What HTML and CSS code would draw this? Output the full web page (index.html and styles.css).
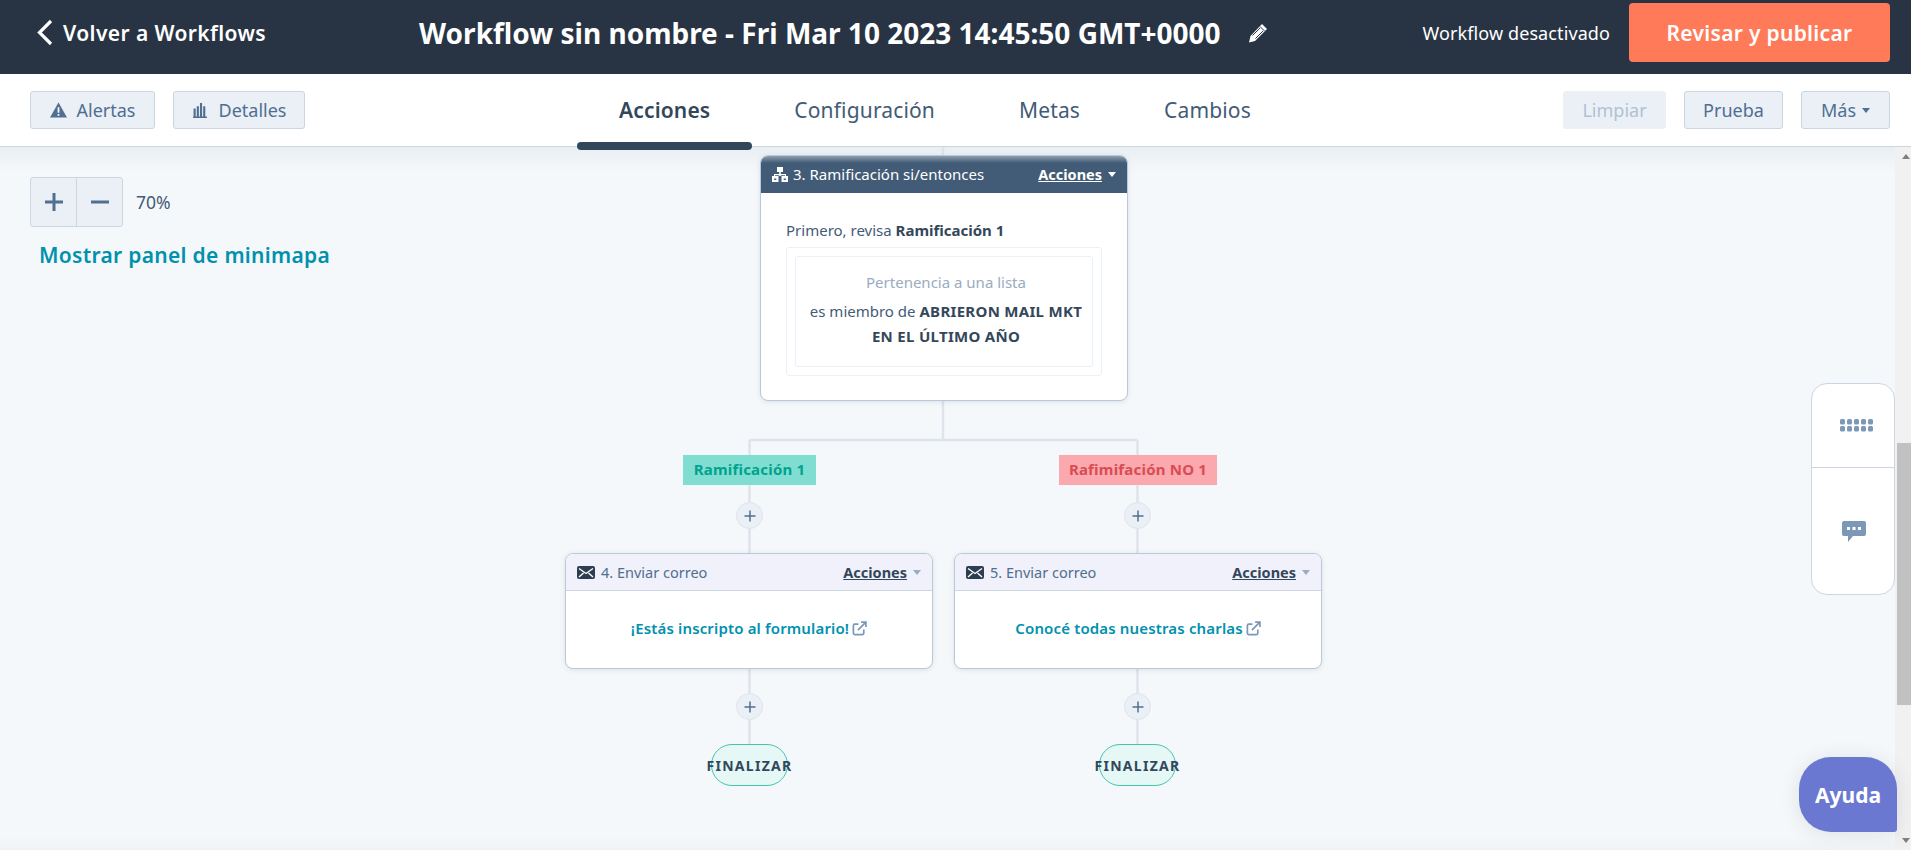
FILE: index.html
```html
<!DOCTYPE html>
<html lang="en">
<head>
    <meta charset="UTF-8">
    <meta name="viewport" content="width=device-width, initial-scale=1.0">
    <title>Workflow</title>
    <link rel="stylesheet" href="styles.css">
</head>
<body>
    <svg class="defs" width="0" height="0">
        <symbol id="i-mail" viewBox="0 0 18 13">
            <rect width="18" height="13" rx="2" fill="#2d3e50"/>
            <path d="M2 2.500l7 5 7-5M2 11l4.500-4M16 11l-4.500-4" fill="none" stroke="#fff" stroke-width="1.400"/>
        </symbol>
        <symbol id="i-link" viewBox="0 0 14 14">
            <path d="M11 8v3.500a1.200 1.200 0 0 1-1.200 1.200H2.500a1.200 1.200 0 0 1-1.200-1.200V4.200A1.200 1.200 0 0 1 2.500 3H6" fill="none" stroke="#7c98b6" stroke-width="1.600"/>
            <path d="M5.500 8.500L12.500 1.500M8.500 1h4.500v4.500" fill="none" stroke="#7c98b6" stroke-width="1.600"/>
        </symbol>
        <symbol id="i-plus" viewBox="0 0 12 12">
            <path d="M6 0.500v11M0.500 6h11" fill="none" stroke="#516f90" stroke-width="1.500"/>
        </symbol>
    </svg>

    <!-- Top bar -->
    <header class="topbar">
        <a class="back">
            <svg class="back-icon" viewBox="0 0 17 27"><path d="M15 2L3.500 13.500 15 25" fill="none" stroke="#fff" stroke-width="3.200"/></svg>
            Volver a Workflows
        </a>
        <h1 class="title">Workflow sin nombre - Fri Mar 10 2023 14:45:50 GMT+0000</h1>
        <svg class="pencil" viewBox="0 0 20 20">
            <path d="M14 1l5 5L7 18l-6 1.500L2.500 13z" fill="#fff"/>
            <path d="M12 3.500l4.500 4.500M4.500 12.500L12 5M7.500 15.500L15 8" stroke="#283444" stroke-width="1"/>
        </svg>
        <span class="status">Workflow desactivado</span>
        <button class="publish">Revisar y publicar</button>
    </header>

    <!-- Tabs bar -->
    <nav class="subbar">
        <div class="btn-group">
            <button class="btn btn-alert">
                <svg class="btn-icon" viewBox="0 0 16 15"><path d="M8 0.500L16 14.500H0z" fill="#516f90"/><path d="M8 5v5M8 11.200v1.600" stroke="#fff" stroke-width="1.600"/></svg>
                Alertas
            </button>
            <button class="btn btn-detail">
                <svg class="btn-icon" viewBox="0 0 14 15"><path d="M1.500 6v8M4.500 4v10M7.500 1v13M10.500 4v10M0 14.500h13" stroke="#516f90" stroke-width="2" fill="none"/></svg>
                Detalles
            </button>
        </div>
        <div class="tabs">
            <a class="tab tab-active">Acciones</a>
            <a class="tab">Configuración</a>
            <a class="tab">Metas</a>
            <a class="tab">Cambios</a>
        </div>
        <div class="btn-group btn-group-right">
            <button class="btn btn-clear">Limpiar</button>
            <button class="btn btn-test">Prueba</button>
            <button class="btn btn-more">Más <span class="caret"></span></button>
        </div>
    </nav>

    <div class="workspace">
        <main class="canvas">
            <div class="zoom-row">
                <div class="zoom">
                    <button class="zoom-btn"><svg class="zoom-icon" viewBox="0 0 18 18"><path d="M9 0v18M0 9h18" stroke="#516f90" stroke-width="3"/></svg></button>
                    <button class="zoom-btn"><svg class="zoom-icon" viewBox="0 0 18 18"><path d="M0 9h18" stroke="#516f90" stroke-width="3"/></svg></button>
                </div>
                <span class="zoom-value">70%</span>
            </div>
            <a class="minimap-link">Mostrar panel de minimapa</a>

            <!-- Workflow diagram -->
            <svg class="wires" width="1895" height="703">
                <path d="M943 0v8M943 254v39M749.500 293H1137.500M749.500 293V406M1137.500 293V406M749.500 521V597M1137.500 521V597" fill="none" stroke="#dfe3eb" stroke-width="2.500"/>
            </svg>

            <section class="node node-branch">
                <div class="node-head node-head-dark">
                    <svg class="branch-icon" viewBox="0 0 16 15">
                        <path d="M5 0h6v5H8.800v2H14v2h-1v-.8H8.800V9h-1.600V8.200H3V9H2V7h5.200V5H5z" fill="#fff"/>
                        <path d="M0 9h6.500v6H0zM9.500 9H16v6H9.500z" fill="#fff"/>
                        <path d="M2.200 11.500h2.100v1.500H2.200zM11.700 11.500h2.100v1.500h-2.100z" fill="#425b76"/>
                    </svg>
                    <span class="node-name">3. Ramificación si/entonces</span>
                    <a class="node-actions">Acciones</a>
                    <span class="caret caret-white"></span>
                </div>
                <div class="branch-body">
                    <p class="branch-first">Primero, revisa <b>Ramificación 1</b></p>
                    <div class="filter-outer">
                        <div class="filter-inner">
                            <p class="filter-type">Pertenencia a una lista</p>
                            <p class="filter-text">es miembro de <b>ABRIERON MAIL MKT EN EL ÚLTIMO AÑO</b></p>
                        </div>
                    </div>
                </div>
            </section>

            <div class="branch-label label-yes">Ramificación 1</div>
            <div class="branch-label label-no">Rafimifación NO 1</div>

            <button class="add add-a"><svg class="add-icon"><use href="#i-plus"/></svg></button>
            <button class="add add-b"><svg class="add-icon"><use href="#i-plus"/></svg></button>

            <section class="node node-mail node-4">
                <div class="node-head">
                    <svg class="mail-icon"><use href="#i-mail"/></svg>
                    <span class="node-name">4. Enviar correo</span>
                    <a class="node-actions">Acciones</a>
                    <span class="caret caret-light"></span>
                </div>
                <div class="mail-body">
                    <a class="mail-link">¡Estás inscripto al formulario!</a>
                    <svg class="link-icon"><use href="#i-link"/></svg>
                </div>
            </section>

            <section class="node node-mail node-5">
                <div class="node-head">
                    <svg class="mail-icon"><use href="#i-mail"/></svg>
                    <span class="node-name">5. Enviar correo</span>
                    <a class="node-actions">Acciones</a>
                    <span class="caret caret-light"></span>
                </div>
                <div class="mail-body">
                    <a class="mail-link">Conocé todas nuestras charlas</a>
                    <svg class="link-icon"><use href="#i-link"/></svg>
                </div>
            </section>

            <button class="add add-c"><svg class="add-icon"><use href="#i-plus"/></svg></button>
            <button class="add add-d"><svg class="add-icon"><use href="#i-plus"/></svg></button>

            <div class="end end-a"><span>FINALIZAR</span></div>
            <div class="end end-b"><span>FINALIZAR</span></div>

            <!-- Floating side panel -->
            <aside class="side-panel">
                <div class="side-cell side-cell-top">
                    <svg class="dots-icon" viewBox="0 0 34 13">
                        <g fill="#7c98b6">
                            <rect x="0" y="0" width="5" height="5.500" rx="1.500"/><rect x="7" y="0" width="5" height="5.500" rx="1.500"/><rect x="14" y="0" width="5" height="5.500" rx="1.500"/><rect x="21" y="0" width="5" height="5.500" rx="1.500"/><rect x="28" y="0" width="5" height="5.500" rx="1.500"/>
                            <rect x="0" y="7" width="5" height="5.500" rx="1.500"/><rect x="7" y="7" width="5" height="5.500" rx="1.500"/><rect x="14" y="7" width="5" height="5.500" rx="1.500"/><rect x="21" y="7" width="5" height="5.500" rx="1.500"/><rect x="28" y="7" width="5" height="5.500" rx="1.500"/>
                        </g>
                    </svg>
                </div>
                <div class="side-cell">
                    <svg class="chat-icon" viewBox="0 0 24 21">
                        <path d="M2 0h20a2 2 0 0 1 2 2v11a2 2 0 0 1-2 2H11l-5 6v-6H2a2 2 0 0 1-2-2V2a2 2 0 0 1 2-2z" fill="#7c98b6"/>
                        <path d="M5 6h3v3H5zM10.500 6h3v3h-3zM16 6h3v3h-3z" fill="#fff"/>
                    </svg>
                </div>
            </aside>

            <button class="help">Ayuda</button>
        </main>

        <div class="scrollbar">
            <span class="scroll-arrow scroll-up"></span>
            <div class="scroll-track"><div class="scroll-thumb"></div></div>
            <span class="scroll-arrow scroll-down"></span>
        </div>
    </div>
</body>
</html>
```

FILE: styles.css
```css
* {
  box-sizing: border-box;
}

html, body {
  margin: 0;
  height: 850px;
  overflow: hidden;
}

body {
  font-family: "Noto Sans", "Open Sans", sans-serif;
  color: #33475b;
  background-color: #f5f8fa;
}

.defs {
  position: absolute;
}

p {
  margin: 0;
}

button {
  font-family: inherit;
  cursor: pointer;
}

/* Top Bar */
.topbar {
  display: flex;
  align-items: center;
  height: 74px;
  padding: 0 21px 9px 36px;
  background-color: #283444;
  color: #fff;
}

.back {
  display: flex;
  align-items: center;
  font-size: 21px;
  font-weight: 600;
  letter-spacing: 0.4px;
  white-space: nowrap;
}

.back-icon {
  width: 17px;
  height: 27px;
  margin-right: 10px;
}

.title {
  margin: 0 0 0 153px;
  font-size: 28px;
  font-weight: 700;
  white-space: nowrap;
}

.pencil {
  width: 20px;
  height: 20px;
  margin-left: 27px;
}

.status {
  margin-left: auto;
  font-size: 18px;
  letter-spacing: 0.1px;
}

.publish {
  width: 261px;
  height: 59px;
  margin-left: 19px;
  border: 0;
  border-radius: 4px;
  background-color: #ff7a59;
  color: #fff;
  font-size: 21px;
  font-weight: 600;
  letter-spacing: 0.3px;
}

/* Tabs Bar */
.subbar {
  position: relative;
  z-index: 1;
  display: flex;
  align-items: center;
  height: 73px;
  padding: 0 21px 0 30px;
  background-color: #fff;
  border-bottom: 1px solid #cbd6e2;
}

.btn-group {
  display: flex;
  gap: 18px;
}

.btn-group-right {
  margin-left: auto;
}

.btn {
  display: flex;
  align-items: center;
  justify-content: center;
  height: 38px;
  padding: 0;
  border: 1px solid #cbd6e2;
  border-radius: 3px;
  background-color: #eaf0f6;
  color: #506e91;
  font-size: 18px;
}

.btn-icon {
  width: 17px;
  height: 16px;
  margin-right: 10px;
}

.btn-alert {
  width: 125px;
}

.btn-detail {
  width: 132px;
}

.btn-clear {
  width: 103px;
  border-color: #eaf0f6;
  color: #b0c1d4;
}

.btn-test {
  width: 99px;
}

.btn-more {
  width: 89px;
}

.caret {
  display: inline-block;
  width: 0;
  height: 0;
  margin-left: 6px;
  border-left: 4.5px solid transparent;
  border-right: 4.5px solid transparent;
  border-top: 5px solid #506e91;
}

.caret-white {
  border-top-color: #fff;
}

.caret-light {
  border-top-color: #99acc2;
}

.tabs {
  display: flex;
  align-self: stretch;
  margin-left: 272px;
}

.tab {
  position: relative;
  display: flex;
  align-items: center;
  padding: 0 42px;
  font-size: 21px;
  letter-spacing: 0.15px;
  color: #425b76;
}

.tab-active {
  font-weight: 600;
  color: #33475b;
}

.tab-active::after {
  content: "";
  position: absolute;
  left: 0;
  right: 0;
  bottom: -4px;
  height: 8px;
  border-radius: 4px;
  background-color: #33475b;
}

/* Canvas */
.workspace {
  display: flex;
  height: 703px;
}

.canvas {
  position: relative;
  flex: 1;
  padding: 30px 0 0 30px;
  background: linear-gradient(#e9eef3 0, #f5f8fa 24px, #f5f8fa calc(100% - 14px), #f0f3f6 100%);
}

.zoom-row {
  display: flex;
  align-items: center;
}

.zoom {
  display: flex;
  width: 93px;
  height: 50px;
  border: 1px solid #cbd6e2;
  border-radius: 3px;
  background-color: #eaf0f6;
}

.zoom-btn {
  display: flex;
  align-items: center;
  justify-content: center;
  flex: 1;
  padding: 0;
  border: 0;
  background: none;
}

.zoom-btn + .zoom-btn {
  border-left: 1px solid #cbd6e2;
}

.zoom-icon {
  width: 18px;
  height: 18px;
}

.zoom-value {
  margin-left: 13px;
  font-size: 17.500px;
  color: #425b76;
}

.minimap-link {
  display: inline-block;
  margin: 14px 0 0 9px;
  font-size: 21px;
  font-weight: 600;
  letter-spacing: 0.3px;
  color: #0091ae;
}

/* Diagram */
.wires {
  position: absolute;
  left: 0;
  top: 0;
}

.node {
  position: absolute;
  background-color: #fff;
  border: 1px solid #b9c8da;
  border-radius: 8px;
  box-shadow: 0 1px 5px rgba(45, 62, 80, 0.12);
  overflow: hidden;
}

.node-branch {
  left: 760px;
  top: 8px;
  width: 368px;
  height: 246px;
}

.node-mail {
  top: 406px;
  width: 368px;
  height: 116px;
}

.node-4 {
  left: 565px;
}

.node-5 {
  left: 954px;
}

.node-head {
  display: flex;
  align-items: center;
  height: 37px;
  padding: 0 11px;
  background-color: #f0f1fa;
  border-bottom: 1px solid #cbd6e2;
  font-size: 14.500px;
  color: #516f90;
}

.node-head-dark {
  background: linear-gradient(#8d9fb1 0, #425b76 7px);
  border-bottom-color: #425b76;
  color: #fff;
}

.node-head-dark .node-name {
  font-size: 15px;
}

.branch-icon {
  width: 16px;
  height: 15px;
  margin-right: 5px;
}

.mail-icon {
  width: 18px;
  height: 13px;
  margin-right: 6px;
}

.node-name {
  flex: 1;
  white-space: nowrap;
}

.node-actions {
  font-weight: 700;
  text-decoration: underline;
  color: #33475b;
}

.node-head-dark .node-actions {
  color: #fff;
}

.branch-body {
  padding: 26px 24px 0 25px;
  font-size: 15px;
}

.branch-first {
  line-height: 22px;
  color: #425b76;
}

.branch-first b,
.filter-text b {
  color: #33475b;
}

.filter-outer {
  width: 316px;
  margin-top: 6px;
  padding: 8px;
  border: 1px solid #eaf0f6;
  border-radius: 3px;
}

.filter-inner {
  height: 111px;
  padding: 13px 6px 0 10px;
  border: 1px solid #eaf0f6;
  border-radius: 3px;
  text-align: center;
}

.filter-type {
  line-height: 24px;
  color: #99acc2;
}

.filter-text {
  margin-top: 5px;
  line-height: 24.500px;
  color: #425b76;
}

.filter-text b {
  letter-spacing: 0.3px;
}

.mail-body {
  display: flex;
  align-items: center;
  justify-content: center;
  height: 74px;
}

.mail-link {
  font-size: 15px;
  font-weight: 600;
  letter-spacing: 0.15px;
  color: #0091ae;
}

.link-icon {
  width: 15px;
  height: 15px;
  margin-left: 3px;
}

.branch-label {
  position: absolute;
  top: 308px;
  height: 30px;
  line-height: 28px;
  text-align: center;
  font-size: 15px;
  font-weight: 700;
  letter-spacing: 0.2px;
}

.label-yes {
  left: 683px;
  width: 133px;
  background-color: #7fded1;
  color: #00a38d;
}

.label-no {
  left: 1059px;
  width: 158px;
  background-color: #fba9ae;
  color: #d94c53;
}

.add {
  position: absolute;
  display: flex;
  align-items: center;
  justify-content: center;
  width: 27px;
  height: 27px;
  padding: 0;
  border: 1px solid #dfe3eb;
  border-radius: 50%;
  background-color: #eaf0f6;
}

.add-icon {
  width: 12px;
  height: 12px;
}

.add-a {
  left: 736px;
  top: 355px;
}

.add-b {
  left: 1124px;
  top: 355px;
}

.add-c {
  left: 736px;
  top: 546px;
}

.add-d {
  left: 1124px;
  top: 546px;
}

.end {
  position: absolute;
  top: 597px;
  display: flex;
  align-items: center;
  justify-content: center;
  width: 77px;
  height: 42px;
  border: 1px solid #45c4ae;
  border-radius: 21px;
  background-color: #e5f8f6;
  font-size: 14px;
  font-weight: 700;
  color: #33475b;
}

.end span {
  letter-spacing: 1.3px;
  white-space: nowrap;
}

.end-a {
  left: 711px;
}

.end-b {
  left: 1099px;
}

/* Side Panel */
.side-panel {
  position: absolute;
  top: 236px;
  right: 0;
  width: 84px;
  height: 212px;
  background-color: #fff;
  border: 1px solid #cbd6e2;
  border-radius: 16px;
}

.side-cell {
  display: flex;
  align-items: center;
  justify-content: center;
  height: 126px;
}

.side-cell-top {
  height: 84px;
  border-bottom: 1px solid #cbd6e2;
}

.dots-icon {
  width: 34px;
  height: 13px;
  margin-left: 7px;
}

.chat-icon {
  width: 24px;
  height: 21px;
  margin-left: 2px;
}

/* Help Button */
.help {
  position: absolute;
  top: 610px;
  right: -2px;
  width: 98px;
  height: 75px;
  padding: 0;
  border: 0;
  border-radius: 32px 32px 3px 32px;
  background-color: #6a78d1;
  box-shadow: 0 2px 20px rgba(45, 62, 80, 0.12);
  color: #fff;
  font-size: 21px;
  font-weight: 700;
}

/* Scrollbar */
.scrollbar {
  display: flex;
  flex-direction: column;
  align-items: flex-end;
  width: 16px;
  background-color: #f1f1f1;
}

.scroll-arrow {
  width: 0;
  height: 0;
  margin: 7px 1px 7px 0;
  border-left: 4.5px solid transparent;
  border-right: 4.5px solid transparent;
}

.scroll-up {
  border-bottom: 5px solid #808080;
}

.scroll-down {
  border-top: 5px solid #808080;
}

.scroll-track {
  flex: 1;
  width: 14px;
  padding-top: 277px;
}

.scroll-thumb {
  height: 262px;
  background-color: #c1c1c1;
}
```
